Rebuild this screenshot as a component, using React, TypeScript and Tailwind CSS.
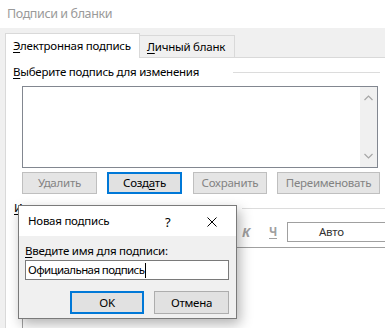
import React from "react";

const font = { fontFamily: '"Noto Sans", "Segoe UI", sans-serif' };

function Chevron({ up }: { up?: boolean }) {
  return (
    <svg width="9" height="6" viewBox="0 0 9 6" className="block">
      <path
        d={up ? "M0.5 5 L4.5 1 L8.5 5" : "M0.5 1 L4.5 5 L8.5 1"}
        fill="none"
        stroke="#a6a6a6"
        strokeWidth="1.2"
      />
    </svg>
  );
}

export default function App() {
  return (
    <div
      className="relative w-[385px] h-[328px] overflow-hidden bg-[#f0f0f0] text-[11.5px] tracking-[-0.25px] leading-[16px] text-black whitespace-nowrap"
      style={font}
    >
      {/* window title */}
      <div className="h-[28px] bg-white pl-[7px] flex items-center text-[12.5px] tracking-[-0.4px] text-[#9a9a9a]">
        Подписи и бланки
      </div>

      <div className="pl-[5px] pt-[5px]">
        {/* tabs */}
        <div className="relative z-10 flex items-end h-[24px]">
          <div className="h-[25px] w-[135px] -mb-px bg-white border border-b-0 border-[#d9d9d9] pl-[7px] flex items-center">
            <span>
              <span className="underline underline-offset-2">Э</span>лектронная подпись
            </span>
          </div>
          <div className="h-[22px] w-[95px] border border-l-0 border-b-0 border-[#d9d9d9] pl-[7px] flex items-center">
            <span>
              <span className="underline underline-offset-2">Л</span>ичный бланк
            </span>
          </div>
        </div>

        {/* pane */}
        <div className="bg-white border-l border-t border-[#d9d9d9] h-[300px] flex flex-col">
          <div className="mt-[6px] h-[16px] flex items-center pl-[7px] pr-[5px]">
            <span>
              <span className="underline underline-offset-2">В</span>ыберите подпись для изменения
            </span>
            <div className="flex-1 ml-[34px] border-t border-[#dcdcdc]" />
          </div>

          {/* list box */}
          <div className="mt-[6px] ml-[16px] w-[356px] h-[82px] border border-[#828790] bg-white flex justify-end">
            <div className="w-[17px] h-full bg-[#f0f0f0] flex flex-col items-center justify-between py-[8px]">
              <Chevron up />
              <Chevron />
            </div>
          </div>

          {/* buttons */}
          <div className="mt-[4px] ml-[16px] flex h-[22px] gap-[10px]">
            <div className="w-[75px] h-full border border-[#bfbfbf] bg-[#e5e5e5] text-[#838383] flex items-center justify-center">
              Удалить
            </div>
            <div className="w-[75px] h-full border-2 border-[#0078d7] bg-[#e1e1e1] flex items-center justify-center">
              <span>
                Созд<span className="underline underline-offset-2">а</span>ть
              </span>
            </div>
            <div className="w-[74px] h-full border border-[#bfbfbf] bg-[#e5e5e5] text-[#838383] flex items-center justify-center ml-px">
              Сохранить
            </div>
            <div className="w-[103px] h-full border border-[#bfbfbf] bg-[#e5e5e5] text-[#838383] flex items-center justify-center">
              Переименовать
            </div>
          </div>

          {/* edit group label (mostly hidden by the dialog) */}
          <div className="mt-[6px] h-[16px] flex items-center pl-[8px]">
            <span>
              <span className="underline underline-offset-2">И</span>
            </span>
            <div className="flex-1 ml-[220px] border-t border-[#dcdcdc]" />
          </div>

          {/* toolbar */}
          <div className="mt-[6px] h-[20px] flex items-center">
            <div className="w-[236px]" />
            <span className="italic font-bold text-[#a0a0a0] text-[13px] w-[14px]">К</span>
            <span className="ml-[13px] text-[#a0a0a0] underline underline-offset-2 w-[12px] font-bold">Ч</span>
            <div className="ml-[6px] flex-1 h-[20px] border border-[#a0a0a0] border-r-0 flex items-center pl-[31px] text-[#333]">
              Авто
            </div>
          </div>

          {/* editor */}
          <div className="mt-[5px] ml-[16px] flex-1 border-l border-t border-[#a0a0a0] bg-white" />
        </div>
      </div>

      {/* dialog */}
      <div className="absolute left-[18px] top-[205px] w-[219px] h-[114px] border border-[#7a7a7a] bg-[#f0f0f0] shadow-[3px_5px_12px_rgba(0,0,0,0.3)] flex flex-col">
        <div className="h-[30px] bg-white flex items-center pl-[9px] relative">
          <span>Новая подпись</span>
          <span className="absolute left-[146px] top-[8px] text-[13px]">?</span>
          <svg
            className="absolute left-[188px] top-[11px]"
            width="10"
            height="10"
            viewBox="0 0 10 10"
          >
            <path d="M0.5 0.5 L9.5 9.5 M9.5 0.5 L0.5 9.5" stroke="#000" strokeWidth="1" />
          </svg>
        </div>
        <div className="pl-[6px] pt-[7px] h-[16px] box-content flex items-center">
          <span>
            <span className="underline underline-offset-2">В</span>ведите имя для подписи:
          </span>
        </div>
        <div className="ml-[6px] mt-[1px] w-[204px] h-[20px] border border-[#7a7a7a] bg-white flex items-center pl-[2px]">
          <span className="tracking-[-0.6px]">Официальная подпись</span>
          <span className="ml-[1px] w-px h-[15px] bg-black" />
        </div>
        <div className="mt-[11px] ml-[51px] flex gap-[10px] h-[23px]">
          <div className="w-[74px] h-full border-2 border-[#0078d7] bg-[#e1e1e1] flex items-center justify-center">
            OK
          </div>
          <div className="w-[75px] h-full border border-[#adadad] bg-[#e1e1e1] flex items-center justify-center">
            Отмена
          </div>
        </div>
      </div>
    </div>
  );
}
